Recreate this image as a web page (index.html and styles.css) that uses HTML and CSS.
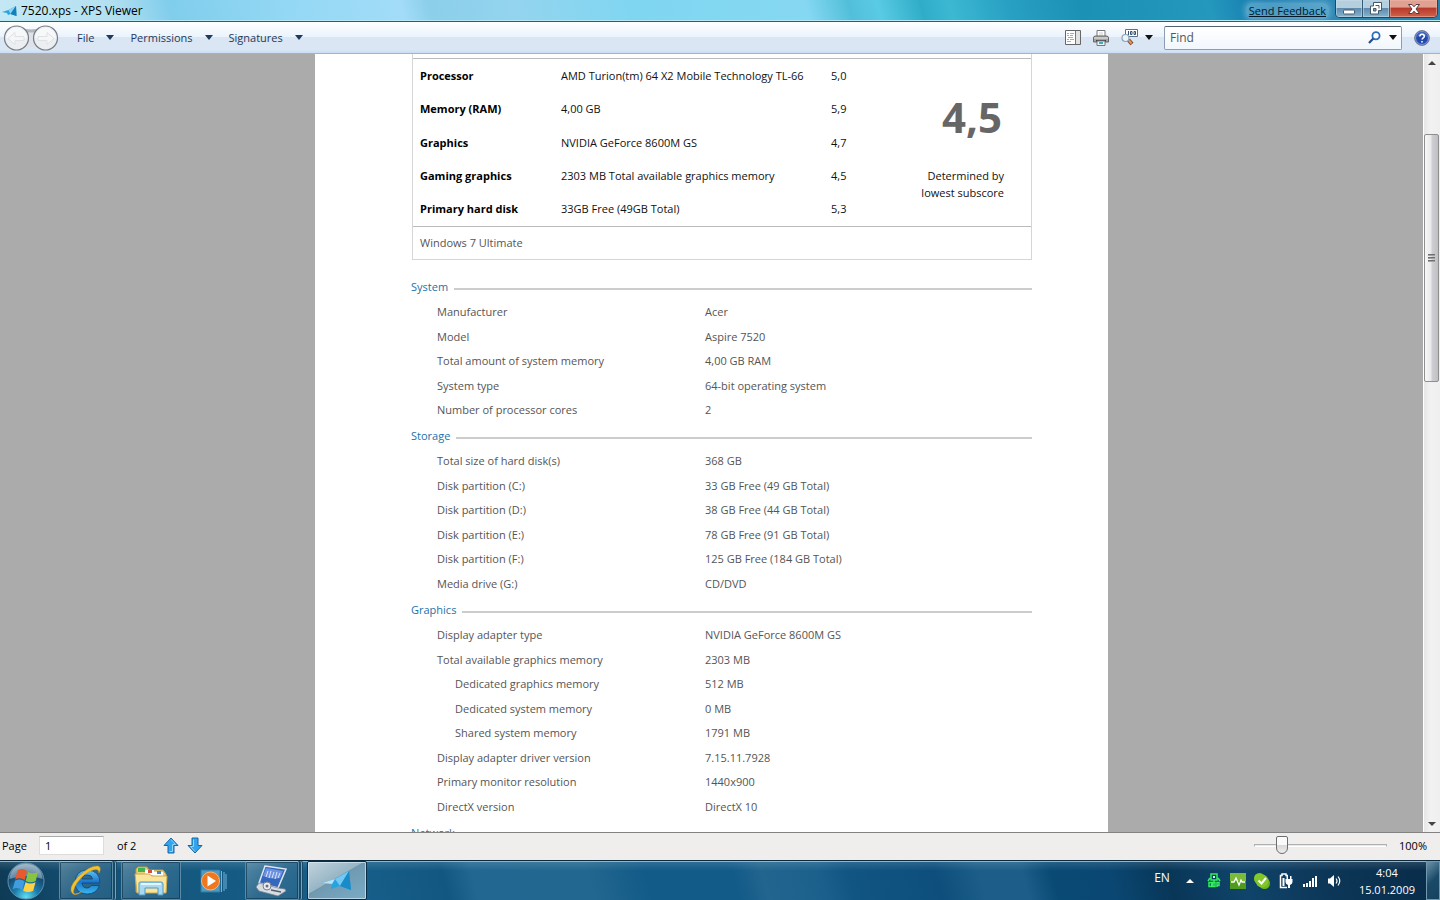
FILE: index.html
```html
<!DOCTYPE html>
<html lang="en">
<head>
<meta charset="utf-8">
<title>7520.xps - XPS Viewer</title>
<link rel="stylesheet" href="styles.css">
</head>
<body>
<div class="desktop">
  <header class="titlebar">
    <svg class="app-icon" width="15" height="12" viewBox="0 0 30 24"><path d="M0 14 13 10 28 2 29 22 17 18 12 20 10 16z" fill="#2ba3dc"/><path d="M13 10 28 2 17 18z" fill="#8ad4f3"/><path d="M17 18 28 2 29 22z" fill="#137fb9"/></svg>
    <h1 class="title">7520.xps - XPS Viewer</h1>
    <a class="feedback" href="#">Send Feedback</a>
    <div class="captions">
      <button class="cap cap-min" aria-label="Minimize"><svg width="14" height="12" viewBox="0 0 14 12"><rect x="1.500" y="7" width="11" height="4" rx="1" fill="#fff" stroke="#4a5a6a"/></svg></button>
      <button class="cap cap-max" aria-label="Restore"><svg width="14" height="13" viewBox="0 0 14 13"><path d="M4.500.5h8v8h-3v3.500h-8v-8h3z" fill="#fff" stroke="#47576a"/><path d="M4.500 6.500h2.500v2.500h-2.500z" fill="#79a4bf" stroke="#47576a"/><path d="M6.500 3.500h3.500v3" fill="none" stroke="#47576a"/></svg></button>
      <button class="cap cap-close" aria-label="Close"><svg width="14" height="12" viewBox="0 0 14 12"><path d="M1.500 1.500h3.500L7 3.800l2-2.300h3.500L9 6l3.500 4.500H9L7 8.200 5 10.500H1.500L5 6z" fill="#fff" stroke="#5a3a3f"/></svg></button>
    </div>
  </header>

  <nav class="toolbar">
    <svg class="history" width="56" height="28" viewBox="0 0 56 28"><path d="M14 3q14 5 30 0v22q-15-4-30 0z" fill="#dfe3e9"/><path d="M16 3q12 5 24 0v4q-12 3-24 0z" fill="#b3b8bf"/><g fill="#eceff2" stroke="#777d85" stroke-width="1.200"><circle cx="13.500" cy="14" r="12"/><circle cx="42.500" cy="14" r="12"/></g><path d="M3 14a10.500 10.500 0 0 1 21 0zM32 14a10.500 10.500 0 0 1 21 0z" fill="#f6f8f9"/><g fill="#f5f6f8" stroke="#dfe2e5"><path d="M5 14.500l7-6v4h9v4h-9v4zM51 14.500l-7-6v4h-9v4h9v4z"/></g></svg>
    <div class="menus">
      <button class="menu">File<i class="caret"></i></button>
      <button class="menu">Permissions<i class="caret"></i></button>
      <button class="menu">Signatures<i class="caret"></i></button>
    </div>
    <div class="tools">
      <button class="tool" aria-label="Outline"><svg width="16" height="16" viewBox="0 0 16 16"><path d="M.5.500h15v14H.5z" fill="#fff" stroke="#666"/><path d="M11 1h4v13h-4z" fill="#e2e2e2"/><path d="M10.500 1v13" stroke="#777"/><path d="M2 3.500h2M5 3.500h4M2 5.500h2M5 5.500h3M3 7.500h5M2 9.500h2M5 9.500h4M2 11.500h4" stroke="#aaa"/></svg></button>
      <button class="tool" aria-label="Print"><svg width="16" height="16" viewBox="0 0 16 16"><path d="M4 7V.5h8V7" fill="#fff" stroke="#777"/><path d="M6 3h4M6 5h4" stroke="#ccc"/><path d="M.5 8q0-2 2-2h11q2 0 2 2v4H.5z" fill="#a3a5a8" stroke="#666"/><path d="M1 8h14" stroke="#eee"/><path d="M3 11h10" stroke="#444" stroke-width="2"/><path d="M4 11h8v4.500H4z" fill="#e7f6fa" stroke="#777"/><path d="M6 13h4" stroke="#4ba7bb" stroke-width="2"/></svg></button>
      <button class="tool zoom-tool" aria-label="Zoom"><svg width="18" height="17" viewBox="0 0 18 17"><path d="M4.500.5h12v7h-12z" fill="#fff" stroke="#5b6f8c"/><path d="M7.500 2v4M9.500 2.500h1.500v3H9.500zM13 2.500h1.500v3H13z" fill="none" stroke="#344e72"/><path d="m7.500 11 3.500 4" stroke="#7a4a28" stroke-width="4"/><path d="m8 11.500 2.500 3" stroke="#e9974c" stroke-width="2"/><circle cx="4.500" cy="9" r="3.500" fill="#e9f5fb" stroke="#8ea4b5" stroke-width="1.200"/></svg><i class="caret dark"></i></button>
      <div class="search">
        <input type="text" class="find" placeholder="Find" aria-label="Find">
        <svg width="13" height="13" viewBox="0 0 13 13"><circle cx="8" cy="4.800" r="3.600" fill="#fff" stroke="#2d6eb9" stroke-width="1.800"/><path d="M5.300 7.500 1 12" stroke="#214f91" stroke-width="2.200"/></svg>
        <i class="caret dark"></i>
      </div>
      <button class="tool" aria-label="Help"><svg width="16" height="16" viewBox="0 0 16 16"><circle cx="8" cy="8" r="7.400" fill="#2348ae" stroke="#777f90"/><circle cx="8" cy="8" r="6.400" fill="none" stroke="#9fb4e6" stroke-width=".8"/><path d="M3 7q5-4 10 0Q12 3 8 2.500 4 3 3 7z" fill="#5478cf"/><path d="M5.800 6.500Q6 4.300 8.100 4.300q2.300.1 2.200 2 0 1-1.300 1.800-.9.600-.9 1.500M8 11v1.500" fill="none" stroke="#fff" stroke-width="1.600"/></svg></button>
    </div>
  </nav>

  <main class="viewer">
    <div class="canvas">
      <article class="page">
        <section class="rating">
          <table class="scores">
            <tr><th scope="row">Processor</th><td>AMD Turion(tm) 64 X2 Mobile Technology TL-66</td><td class="sub">5,0</td></tr>
            <tr><th scope="row">Memory (RAM)</th><td>4,00 GB</td><td class="sub">5,9</td></tr>
            <tr><th scope="row">Graphics</th><td>NVIDIA GeForce 8600M GS</td><td class="sub">4,7</td></tr>
            <tr><th scope="row">Gaming graphics</th><td>2303 MB Total available graphics memory</td><td class="sub">4,5</td></tr>
            <tr><th scope="row">Primary hard disk</th><td>33GB Free (49GB Total)</td><td class="sub">5,3</td></tr>
          </table>
          <div class="base">
            <strong class="base-score">4,5</strong>
            <p class="base-note">Determined by<br>lowest subscore</p>
          </div>
          <p class="edition">Windows 7 Ultimate</p>
        </section>

        <section class="group">
          <h2>System</h2>
          <table>
            <tr><th scope="row">Manufacturer</th><td>Acer</td></tr>
            <tr><th scope="row">Model</th><td>Aspire 7520</td></tr>
            <tr><th scope="row">Total amount of system memory</th><td>4,00 GB RAM</td></tr>
            <tr><th scope="row">System type</th><td>64-bit operating system</td></tr>
            <tr><th scope="row">Number of processor cores</th><td>2</td></tr>
          </table>
        </section>
        <section class="group">
          <h2>Storage</h2>
          <table>
            <tr><th scope="row">Total size of hard disk(s)</th><td>368 GB</td></tr>
            <tr><th scope="row">Disk partition (C:)</th><td>33 GB Free (49 GB Total)</td></tr>
            <tr><th scope="row">Disk partition (D:)</th><td>38 GB Free (44 GB Total)</td></tr>
            <tr><th scope="row">Disk partition (E:)</th><td>78 GB Free (91 GB Total)</td></tr>
            <tr><th scope="row">Disk partition (F:)</th><td>125 GB Free (184 GB Total)</td></tr>
            <tr><th scope="row">Media drive (G:)</th><td>CD/DVD</td></tr>
          </table>
        </section>
        <section class="group">
          <h2>Graphics</h2>
          <table>
            <tr><th scope="row">Display adapter type</th><td>NVIDIA GeForce 8600M GS</td></tr>
            <tr><th scope="row">Total available graphics memory</th><td>2303 MB</td></tr>
            <tr class="nested"><th scope="row">Dedicated graphics memory</th><td>512 MB</td></tr>
            <tr class="nested"><th scope="row">Dedicated system memory</th><td>0 MB</td></tr>
            <tr class="nested"><th scope="row">Shared system memory</th><td>1791 MB</td></tr>
            <tr><th scope="row">Display adapter driver version</th><td>7.15.11.7928</td></tr>
            <tr><th scope="row">Primary monitor resolution</th><td>1440x900</td></tr>
            <tr><th scope="row">DirectX version</th><td>DirectX 10</td></tr>
          </table>
        </section>
        <section class="group">
          <h2>Network</h2>
        </section>
      </article>
    </div>
    <div class="scrollbar">
      <button class="scroll-btn" aria-label="Scroll up"><i class="up"></i></button>
      <div class="track"><div class="thumb"><i></i><i></i><i></i></div></div>
      <button class="scroll-btn" aria-label="Scroll down"><i class="down"></i></button>
    </div>
  </main>

  <footer class="status">
    <label for="pageno">Page</label>
    <input id="pageno" class="pageno" type="text" value="1">
    <span class="total">of 2</span>
    <button class="step" aria-label="Previous page"><svg width="16" height="17" viewBox="0 0 16 17"><path d="M8 1 15 8.500H11v7.500H5V8.500H1z" fill="#31a6ee" stroke="#1a65a8"/><path d="M8 2.500 12.500 7.500H9.500v7H6.500" fill="none" stroke="#8cd4fb"/></svg></button>
    <button class="step" aria-label="Next page"><svg width="16" height="17" viewBox="0 0 16 17"><path d="M8 16 15 8.500H11V1H5v7.500H1z" fill="#31a6ee" stroke="#1a65a8"/><path d="M6.500 2.500v7H3.500L8 14.500" fill="none" stroke="#8cd4fb"/></svg></button>
    <input class="zoom" type="range" min="0" max="100" value="18" aria-label="Zoom level">
    <output class="percent">100%</output>
  </footer>

  <div class="taskbar">
    <button class="start" aria-label="Start"><svg width="38" height="38" viewBox="0 0 38 38"><defs><radialGradient id="orb" cx=".5" cy=".95" r=".95"><stop offset="0" stop-color="#5fe0f5"/><stop offset=".35" stop-color="#1d7eae"/><stop offset=".7" stop-color="#17486e"/><stop offset="1" stop-color="#91abbd"/></radialGradient></defs><circle cx="19" cy="19" r="18" fill="url(#orb)" stroke="#5e93b0"/><path d="M2.500 17Q4 3 19 2q15 1 16.500 15-16-6-33 0z" fill="#c9dce6" opacity=".45"/><path d="M10.500 8.500q5-3 9.500.5l-2.300 9q-4.700-3-9.500-.5z" fill="#e8592b"/><path d="M21 10q5 2.500 10 0l-2.300 9q-5 2.500-10 0z" fill="#87c440"/><path d="M8 18.700q4.700-2.700 9.500.5l-2.300 8.500q-4.700-3-9.500-.5z" fill="#3f9de0"/><path d="M18.500 20.200q5 2.500 10 0l-2.300 8.500q-5 2.500-10 0z" fill="#ffd246"/></svg></button>
    <div class="apps">
      <button class="app stacked" aria-label="Internet Explorer"><svg width="34" height="34" viewBox="0 0 34 34"><defs><linearGradient id="ie" x2="0" y2="1"><stop offset="0" stop-color="#63c4f6"/><stop offset=".5" stop-color="#1a75c8"/><stop offset="1" stop-color="#39b8ee"/></linearGradient></defs><path fill-rule="evenodd" d="M31 19H13q.5 5 5 5 3 0 4-2.500h8.500Q27.500 30 18 30 6 29.500 6 18 6.500 6.500 18 6q13 .5 13 13zM13 15h10.500q-.5-4-5-4-5 0-5.500 4z" fill="url(#ie)" stroke="#0b4583" stroke-width=".8"/><path d="M4 30Q-2 25 9 13 21 1 29 2q4 1 1 7 0-5-6-3Q15 9 8 19 2 29 6 30q3 0 7-3-5 5-9 3z" fill="#f3c229" stroke="#c8912a" stroke-width=".5"/></svg></button>
      <button class="app" aria-label="Windows Explorer"><svg width="34" height="32" viewBox="0 0 34 32"><path d="M2 4 4 2h9l2 3h14l3 4v18H2z" fill="#e9ce74" stroke="#b99b48"/><path d="M4 3h7v4H4z" fill="#3eb54a"/><path d="M11 5h9v5h-9z" fill="#fff"/><path d="M14 5h4v3h-4z" fill="#d44c3c"/><path d="M19 7h10v4H19z" fill="#fff"/><path d="M23 6h4v3h-4z" fill="#3e83cc"/><path d="M1 9h14l3 2h15l-1 17H3z" fill="#f8e49a" stroke="#c9aa55"/><path d="M5 18q0-1 2-1h20q2 0 2 2v11h-5v-7H11v7H5z" fill="#a6d9f2" stroke="#5798c4"/><path d="M7 19h20" stroke="#e4f7ff" stroke-width="2"/></svg></button>
      <button class="app plain" aria-label="Media Player"><svg width="30" height="28" viewBox="0 0 30 28"><path d="M3 3h19v22H3z" fill="#4f9bc4" stroke="#2c7aa7"/><path d="M23.500 4v21M26 5v19M28 7v15" stroke="#6db6dc"/><circle cx="12.500" cy="14" r="9" fill="#f0761f" stroke="#fbb56c"/><path d="m9.500 8.500 8.500 5.500-8.500 5.500z" fill="#fff"/></svg></button>
      <button class="app stacked" aria-label="System tool"><svg width="32" height="32" viewBox="0 0 32 32"><path d="M9 1 30 4 22 23 3 18z" fill="#3667bf" stroke="#dfe6f0" stroke-width="1.500"/><path d="M10 3 27 6l-3 7Q16 15 7 11z" fill="#6d92e0"/><path d="m12 6-2 6M15 6l-2 7M18 7l-2 6M21 7l-2 7M24 8l-2 5" stroke="#dbe5ff"/><path d="m3 18 19 5 7 1 1 2-8 5-19-5-3-4z" fill="#d7dce2" stroke="#737d8c" stroke-width=".7"/><circle cx="11" cy="21" r="4" fill="#e9edf1" stroke="#79818c"/><circle cx="11" cy="21" r="1.500" fill="#68717e"/><path d="m15 25 10 2" stroke="#555d69" stroke-width="1.500"/></svg></button>
      <button class="app active" aria-label="XPS Viewer"><svg width="34" height="24" viewBox="0 0 34 24"><path d="M2 14 15 10 29 2 31 21 20 17 11 20 12 15z" fill="#2aa2df"/><path d="M15 10 29 2 20 17z" fill="#72c9f2"/><path d="M20 17 29 2l2 19z" fill="#188bc8"/><path d="M2 14 15 10 12 15z" fill="#b7e4f7"/></svg></button>
    </div>
    <div class="tray">
      <span class="lang">EN</span>
      <i class="tray-up"></i>
      <div class="tray-icons">
        <svg width="16" height="16" viewBox="0 0 16 16"><path d="M5 1h6v6H5zM8 7v2M4 5 2 8M12 5l2 3M3 9.500h2.500v4H3zM7 9.500h2v4H7zM11 14V9.500h2v3h-2" fill="none" stroke="#32ed60" stroke-width="1.500"/><path d="M7 3h2v2H7z" fill="#c4ffd0"/></svg>
        <svg width="16" height="16" viewBox="0 0 16 16"><path d="M0 0h16v16H0z" fill="#4f9b20"/><path d="M0 0h16v8H0z" fill="#7cba3a"/><path d="M1 9h3l2-4 3 7 2-5 1 2h3" fill="none" stroke="#fff" stroke-width="1.300"/></svg>
        <svg width="16" height="16" viewBox="0 0 16 16"><circle cx="5.500" cy="5.500" r="5.500" fill="#83c929"/><circle cx="10.500" cy="10.500" r="5.500" fill="#6db71c"/><circle cx="8" cy="8" r="6.500" fill="#81c72c"/><path d="m4.500 7.500 3 3 4.500-5.500" fill="none" stroke="#fff" stroke-width="2"/></svg>
        <svg width="16" height="16" viewBox="0 0 16 16"><path d="M9 14.500H2.500v-12H4V1h4v1.500h2" fill="none" stroke="#fff" stroke-width="1.500"/><path d="M4.500 5h2v8h-2z" fill="#fff"/><path d="M7.500 6h7v3q0 2-2.500 3v3h-2v-3Q7.500 11 7.500 9zM8.500 3H10v3H8.500zM12 3h1.500v3H12z" fill="#fff"/></svg>
        <svg width="16" height="16" viewBox="0 0 16 16"><path d="M1 11h2v3H1zM4 10h2v4H4zM7 8h2v6H7zM10 5h2v9h-2zM13 3h2v11h-2z" fill="#fff"/></svg>
        <svg width="16" height="16" viewBox="0 0 16 16"><path d="M2 5.500h2L8 2v12l-4-3.500H2z" fill="#fff"/><path d="M10 5.500q2 2.500 0 5M12 3.500q3.500 4.500 0 9" fill="none" stroke="#fff" stroke-width="1.200"/></svg>
      </div>
      <div class="clock"><span>4:04</span><span>15.01.2009</span></div>
      <button class="show-desktop" aria-label="Show desktop"></button>
    </div>
  </div>
</div>
</body>
</html>
```

FILE: styles.css
```css
* { box-sizing: border-box; }
body {
  margin: 0;
  font-family: "Open Sans", "Noto Sans", sans-serif;
  font-size: 11px;
  line-height: 16px;
  color: #000;
}
button { font: inherit; color: inherit; background: none; border: 0; padding: 0; }
input { font: inherit; }
h1, h2, p { margin: 0; font-size: inherit; font-weight: normal; }
svg { display: block; }

.desktop { display: flex; flex-direction: column; height: 100vh; overflow: hidden; }

/* Title bar */
.titlebar {
  display: flex;
  align-items: center;
  flex: none;
  height: 22px;
  padding: 0 2px;
  border-bottom: 1px solid #2f5c70;
  box-shadow: inset 0 -1px #b9e8f5;
  background: linear-gradient(75deg, #c4e8f5 0%, #b3e0f1 8%, #80cdec 12%, #93d8f5 20%, #a2dcf8 28%, #8bcfea 30%, #94d4ef 36%, #7fd6f1 44%, #86d8f2 56%, #52bfd9 59%, #5acbe4 61%, #2fadc8 64%, #3cb8d2 66%, #28a0c3 70%, #1b91b5 75%, #2498bd 84%, #1478ad 88%, #2d89b6 92%, #2d7fa8 100%);
}
.app-icon { margin-right: 4px; }
.title { flex: 1; font-size: 12px; }
.feedback { color: #00182c; margin-right: 6px; padding: 0 3px; border-radius: 6px; background: #8fc6de77; box-shadow: 0 0 5px 2px #8fc6de77; }
.captions { display: flex; align-self: flex-start; border: 1px solid #23465e; border-top: 0; border-radius: 0 0 5px 5px; overflow: hidden; }
.cap { display: grid; place-items: center; width: 27px; height: 17px; border-right: 1px solid #355a73; background: linear-gradient(#b6cfdf 0 45%, #5d8cae 50%, #86b5cf); box-shadow: inset 0 0 0 1px #c6dcea88; }
.cap-close { width: 47px; border: 0; background: linear-gradient(#e0a092 0 40%, #b9392a 50%, #cf654d); box-shadow: inset 0 0 0 1px #eeb8a888; }

/* Toolbar */
.toolbar {
  display: flex;
  align-items: center;
  flex: none;
  height: 32px;
  padding: 0 10px 0 3px;
  color: #1e395b;
  border-bottom: 1px solid #9ab6d4;
  background: linear-gradient(#fff 0, #eaf3fc 48%, #dbe6f4 50%, #dbe6f4 90%, #c9dcf4);
}
.history { margin-right: 18px; }
.menus { display: flex; gap: 16px; flex: 1; }
.menu { display: flex; align-items: center; gap: 12px; }
.caret { border: 4px solid transparent; border-top: 5px solid #1e395b; border-bottom: 0; }
.dark { border-top-color: #111; }
.tools { display: flex; align-items: center; gap: 12px; }
.zoom-tool { display: flex; align-items: center; gap: 6px; margin-right: -1px; }
.search {
  display: flex;
  align-items: center;
  gap: 8px;
  width: 238px;
  height: 24px;
  padding-right: 4px;
  border: 1px solid #8d9eb2;
  border-top-color: #52606f;
  border-radius: 2px;
  background: linear-gradient(#fff, #f2f7fd);
}
.find { flex: 1; min-width: 0; padding: 0 5px; border: 0; background: none; font-size: 12px; }
.find::placeholder { color: #555; opacity: 1; }

/* Document area */
.viewer { display: flex; flex: 1; min-height: 0; }
.canvas { flex: 1; min-width: 0; display: flex; justify-content: center; align-items: flex-start; overflow: hidden; background: #ababab; }
.page { flex: none; width: 793px; padding: 0 76px 60px 96px; background: #fff; color: #555; }
.rating {
  display: grid;
  grid-template-columns: 1fr 160px;
  margin: 0 0 13px 1px;
  padding-top: 4px;
  border: 1px solid #d6d6d6;
  border-top: 0;
  color: #111;
}
table { border-collapse: collapse; }
th, td { padding: 0; text-align: left; font-weight: normal; }
.scores { height: 168px; border-top: 1px solid #bbb; }
.scores th { width: 148px; padding-left: 7px; font-weight: bold; color: #000; }
.scores .sub { width: 40px; }
.base { display: flex; flex-direction: column; justify-content: center; padding-right: 27px; text-align: right; border-top: 1px solid #bbb; }
.base-score { padding: 4px 2px 22px 0; font-size: 42px; line-height: 56px; color: #666; }
.base-note { line-height: 17px; }
.edition { grid-column: 1 / -1; padding: 8px 7px; border-top: 1px solid #bbb; color: #555; }
.group h2 { display: flex; align-items: center; gap: 6px; height: 27px; color: #2272ab; }
.group h2::after { content: ""; flex: 1; height: 2px; margin-top: 5px; background: #ccc; }
.group table { width: 100%; }
.group tr { height: 24px; }
.group tr:nth-child(even) { height: 25px; }
.group th { width: 294px; padding-left: 26px; }
.group .nested th { padding-left: 44px; }

.scrollbar { flex: none; display: flex; flex-direction: column; width: 17px; border-left: 1px solid #fff; background: linear-gradient(90deg, #e6e6e6, #f2f2f2 40%, #efefef); }
.scroll-btn { display: grid; place-items: center; height: 17px; }
.up, .down { border: 4px solid transparent; border-top: 0; border-bottom: 4px solid #444; }
.down { border-bottom: 0; border-top: 4px solid #444; }
.track { flex: 1; padding-top: 63px; }
.thumb { display: flex; flex-direction: column; align-items: center; justify-content: center; gap: 1px; width: 15px; height: 248px; border: 1px solid #8e8e8e; border-radius: 2px; background: linear-gradient(90deg, #f8f8f8, #e9e9eb 45%, #cfcfd3 55%, #bfbfc4); }
.thumb i { width: 7px; height: 2px; background: linear-gradient(#555, #bbb); }

/* Status bar */
.status { display: flex; align-items: center; flex: none; height: 28px; padding: 0 13px 2px 2px; border-top: 1px solid #828282; background: #f0eded; }
.pageno { width: 65px; height: 19px; margin: 0 13px 0 12px; padding: 0 5px; border: 1px solid #ddd; border-top-color: #aaa; background: #fff; }
.total { margin-right: 27px; }
.step { margin-right: 8px; }
.zoom { appearance: none; width: 133px; height: 20px; margin: 0 12px 0 auto; background: none; }
.zoom::-webkit-slider-runnable-track { height: 3px; border: 1px solid #b0b0b0; border-bottom-color: #fff; background: #e7eaea; }
.zoom::-webkit-slider-thumb { appearance: none; width: 12px; height: 18px; margin-top: -9px; border: 1px solid #6d6d6d; border-radius: 2px 2px 6px 6px; background: linear-gradient(#fafafa 50%, #d8d8d8 50%, #eee); }

/* Taskbar */
.taskbar {
  display: flex;
  flex: none;
  height: 40px;
  border-top: 1px solid #0b2a3d;
  box-shadow: inset 0 1px #8fb6cc;
  background:
    linear-gradient(#ffffff22, transparent 25%),
    linear-gradient(75deg, #0e3a55 0%, #134c6e 5%, #14587f 12%, #175f8a 25%, #125782 31%, #216792 33%, #22678f 41%, #125a88 45%, #125a88 51%, #22658f 53%, #1b608c 57%, #115583 59%, #0d4e7c 65%, #1c5e89 68%, #1c5e89 71%, #094a75 73%, #0a4772 77%, #083657 81%, #10446a 86%, #0c3657 92%, #082b48 100%);
}
.start { width: 59px; padding: 0 14px 0 7px; }
.apps { display: flex; flex: 1; gap: 2px; }
.app { display: grid; place-items: center; width: 60px; border: 1px solid #a2c0d0; border-color: #a2c0d0 #5a8aa4 #5a8aa4; border-radius: 2px; outline: 1px solid #0b2f4699; outline-offset: -2px; background: linear-gradient(135deg, #8db0c288, #3c7394aa 50%, #2f6c9388); }
.stacked { width: 54px; margin-right: 6px; box-shadow: 2px 0 #174a68, 3px 0 #7ba2b8, 4px 0 #174a68; }
.plain { border-color: transparent; outline: 0; background: none; }
.active { border-color: #0b2c42; outline-color: #d9edf7aa; background: linear-gradient(150deg, #c2d4de 0%, #97b5c5 45%, #7099b0 46%, #78acc8 100%); }
.tray { display: flex; align-items: center; color: #fff; }
.lang { margin: -6px 16px 0 0; font-size: 12px; }
.tray-up { margin-right: 12px; border: 4px solid transparent; border-top: 0; border-bottom: 4px solid #fff; }
.tray-icons { display: flex; gap: 8px; margin-right: 17px; }
.clock { display: flex; flex-direction: column; align-items: center; margin-right: 11px; line-height: 17px; }
.show-desktop { align-self: stretch; width: 14px; border: 1px solid #7198ae; background: linear-gradient(135deg, #6d93a8, #1a4a68 50%, #15415e); }
```
